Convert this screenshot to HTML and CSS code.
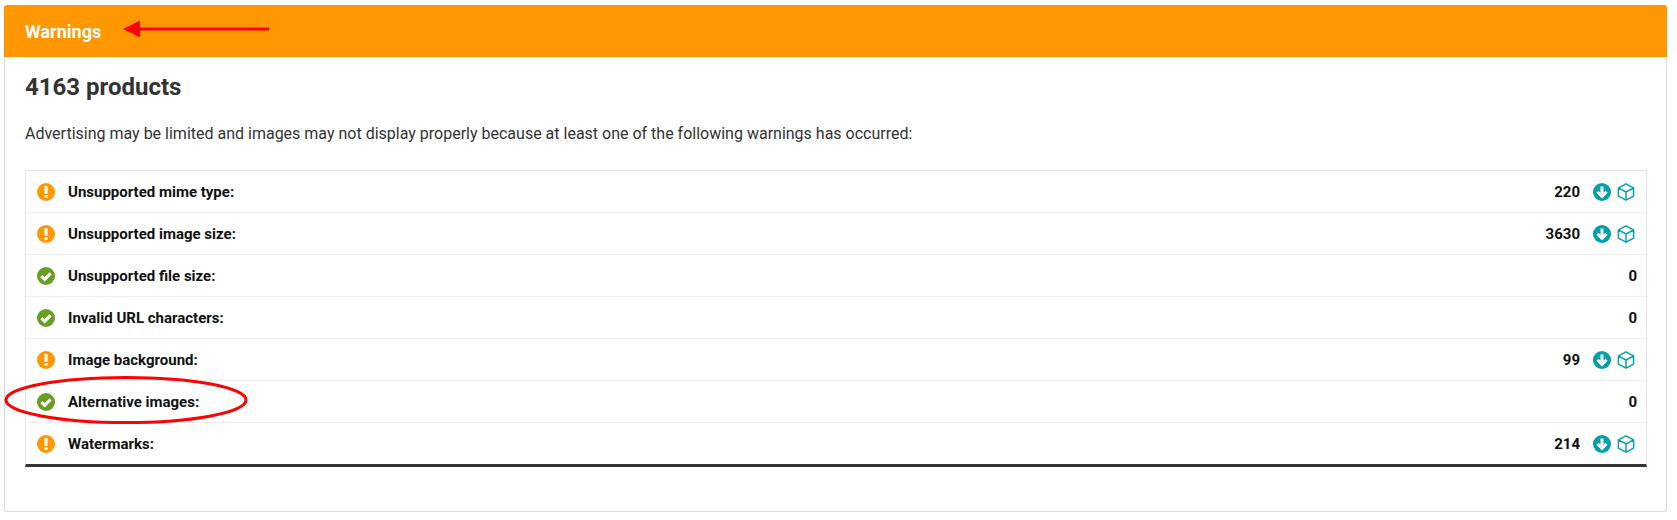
FILE: index.html
```html
<!DOCTYPE html>
<html lang="en">
<head>
    <meta charset="UTF-8">
    <meta name="viewport" content="width=device-width, initial-scale=1.0">
    <title>Warnings</title>
    <link rel="stylesheet" href="styles.css">
</head>
<body>
    <svg width="0" height="0" class="defs">
        <symbol id="i-warn" viewBox="0 0 18 18">
            <circle cx="9" cy="9" r="9" fill="#ff9800"/>
            <rect x="7.400" y="3" width="3.200" height="8" rx="1" fill="#fff"/>
            <circle cx="9" cy="13.500" r="1.700" fill="#fff"/>
        </symbol>
        <symbol id="i-ok" viewBox="0 0 18 18">
            <circle cx="9" cy="9" r="9" fill="#689f23"/>
            <path d="M4.400 9.200l3.300 3.200L13.600 6.400" fill="none" stroke="#fff" stroke-width="3"/>
        </symbol>
        <symbol id="i-down" viewBox="0 0 18 18">
            <circle cx="9" cy="9" r="9" fill="#009faa"/>
            <path d="M9 3.500v9.500M4.500 8.800L9 13.300 13.500 8.800" fill="none" stroke="#fff" stroke-width="3"/>
        </symbol>
        <symbol id="i-box" viewBox="0 0 18 18">
            <path d="M9 .8l7.600 4.100v8.200L9 17.200l-7.600-4.100V4.900zM1.400 4.900L9 9l7.600-4.100M9 9v8.200" fill="none" stroke="#0aa3ad" stroke-width="1.500" stroke-linejoin="round"/>
        </symbol>
    </svg>

    <div class="card">
        <div class="card-head">Warnings</div>
        <div class="card-body">
            <h2 class="title">4163 products</h2>
            <p class="intro">Advertising may be limited and images may not display properly because at least one of the following warnings has occurred:</p>
            <ul class="checks">
                <li>
                    <svg class="state"><use href="#i-warn"/></svg>
                    <span class="name">Unsupported mime type:</span>
                    <span class="count">220</span>
                    <svg class="act act-first"><use href="#i-down"/></svg>
                    <svg class="act act-last"><use href="#i-box"/></svg>
                </li>
                <li>
                    <svg class="state"><use href="#i-warn"/></svg>
                    <span class="name">Unsupported image size:</span>
                    <span class="count">3630</span>
                    <svg class="act act-first"><use href="#i-down"/></svg>
                    <svg class="act act-last"><use href="#i-box"/></svg>
                </li>
                <li>
                    <svg class="state"><use href="#i-ok"/></svg>
                    <span class="name">Unsupported file size:</span>
                    <span class="count">0</span>
                </li>
                <li>
                    <svg class="state"><use href="#i-ok"/></svg>
                    <span class="name">Invalid URL characters:</span>
                    <span class="count">0</span>
                </li>
                <li>
                    <svg class="state"><use href="#i-warn"/></svg>
                    <span class="name">Image background:</span>
                    <span class="count">99</span>
                    <svg class="act act-first"><use href="#i-down"/></svg>
                    <svg class="act act-last"><use href="#i-box"/></svg>
                </li>
                <li>
                    <svg class="state"><use href="#i-ok"/></svg>
                    <span class="name">Alternative images:</span>
                    <span class="count">0</span>
                </li>
                <li>
                    <svg class="state"><use href="#i-warn"/></svg>
                    <span class="name">Watermarks:</span>
                    <span class="count">214</span>
                    <svg class="act act-first"><use href="#i-down"/></svg>
                    <svg class="act act-last"><use href="#i-box"/></svg>
                </li>
            </ul>
        </div>
    </div>

    <!-- red markup drawn on top of the screenshot -->
    <svg class="markup" width="1677" height="520">
        <path d="M269 29H138" stroke="#f00" stroke-width="3" fill="none"/>
        <path d="M123 29l17-8.500v17z" fill="#f00"/>
        <ellipse cx="126" cy="400" rx="120" ry="22.500" fill="none" stroke="#f00" stroke-width="3"/>
    </svg>
</body>
</html>
```

FILE: styles.css
```css
*{ padding: 0; margin: 0; box-sizing: border-box; }
ul,li{ list-style: none; }

body{
    padding: 5px 10px 8px 4px;
    font-family: Roboto, "Liberation Sans", sans-serif;
    color: #333;
    background: #fff;
}
.defs{
    position: absolute;
}
.card{
    height: 507px;
    border: 1px solid #ddd;
    border-top: 0;
    border-radius: 3px;
}
.card-head{
    height: 52px;
    margin: 0 -1px;
    padding: 1px 21px 0 21px;
    line-height: 51px;
    font-size: 18px;
    font-weight: 700;
    color: #fff;
    background: #ff9800;
    border-radius: 3px 3px 0 0;
}
.card-body{
    padding: 15px 19px 0 20px;
}
.title{
    font-size: 24px;
    font-weight: 700;
    line-height: 30px;
}
.intro{
    margin-top: 21px;
    font-size: 16px;
    line-height: 22px;
}
.checks{
    margin-top: 25px;
    border: 1px solid #e6e6e6;
    border-bottom: 3px solid #333;
}
.checks li{
    display: flex;
    align-items: center;
    height: 42px;
    padding: 0 9px 0 11px;
    border-bottom: 1px solid #eee;
    font-size: 15px;
    font-weight: 700;
    color: #111;
}
.checks li:last-child{
    height: 41px;
    border-bottom: 0;
}
.state{
    width: 18px;
    height: 18px;
    margin-right: 13px;
}
.name{
    flex: 1;
}
.act{
    width: 18px;
    height: 18px;
    margin-left: 6px;
}
.act-first{
    margin-left: 13px;
}
.act-last{
    margin-right: 2px;
}
.markup{
    position: absolute;
    left: 0;
    top: 0;
    pointer-events: none;
}
```
